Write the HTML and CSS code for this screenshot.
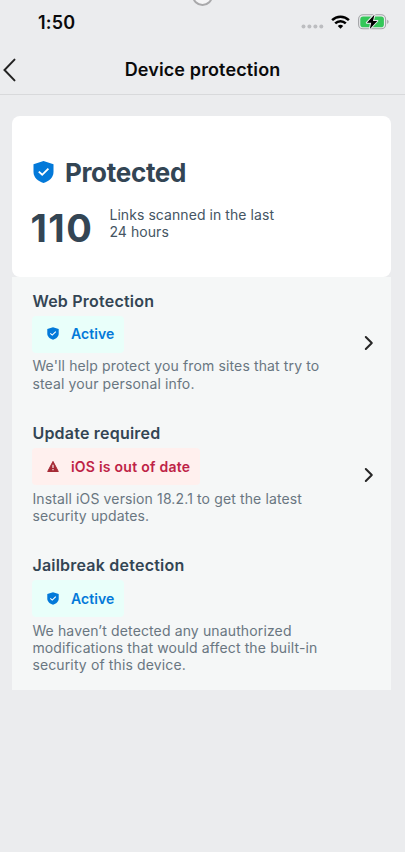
FILE: index.html
```html
<!DOCTYPE html>
<html lang="en">
<head>
<meta charset="utf-8">
<title>Device protection</title>
<link rel="stylesheet" href="styles.css">
</head>
<body>
<svg width="0" height="0" class="defs">
  <symbol id="shield" viewBox="0 0 21 22">
    <path d="M10.5 0 L20.5 3.2 V11 C20.5 16.5 16 20.2 10.5 22 C5 20.2 .5 16.5 .5 11 V3.2 Z" fill="#0379d9"/>
    <path class="tick" d="M5.8 10.6 L9.2 13.8 L15.4 7.6" fill="none" stroke="#fff"/>
  </symbol>
  <symbol id="chevron" viewBox="0 0 10 16">
    <path d="M1.8 2 L7.8 8 L1.8 14" fill="none" stroke="#262626" stroke-width="2" stroke-linecap="round" stroke-linejoin="round"/>
  </symbol>
</svg>
<div class="island"></div>
<header class="header">
  <div class="status">
    <span class="time">1:50</span>
    <span class="signals">
      <svg class="dots" width="23" height="5" viewBox="0 0 23 5" fill="#bcbdc0"><circle cx="2.5" cy="2.5" r="2"/><circle cx="8.4" cy="2.5" r="2"/><circle cx="14.4" cy="2.5" r="2"/><circle cx="20.3" cy="2.5" r="2"/></svg>
      <svg class="wifi" width="19" height="14" viewBox="0 0 19 14" fill="none" stroke="#000" stroke-width="2.5"><path d="M1.1 5.1 A12 12 0 0 1 17.9 5.1"/><path d="M4.2 8.4 A7.6 7.6 0 0 1 14.8 8.4"/><path d="M6.8 10.9 A4 4 0 0 1 12.2 10.9 L9.5 13.7 Z" fill="#000" stroke="none"/></svg>
      <svg class="battery" width="31" height="16" viewBox="0 0 31 16"><rect x=".6" y=".8" width="27" height="14" rx="4.4" fill="none" stroke="#a3a4a7" stroke-width="1.1"/><rect x="2.3" y="2.4" width="23.6" height="10.8" rx="2.8" fill="#34c759"/><path d="M29.2 5.8 Q30.6 6.5 30.6 7.8 T29.2 9.9 Z" fill="#a3a4a7"/><path d="M16.4 .8 L8.9 8.8 H13.2 L11.8 14.9 L19.3 6.9 H15 Z" fill="#000" stroke="#ebecee" stroke-width="2" paint-order="stroke" stroke-linejoin="round"/></svg>
    </span>
  </div>
  <div class="nav">
    <svg class="back" width="14" height="24" viewBox="0 0 14 24"><path d="M12.5 1.6 L2.5 12 L12.5 22.4" fill="none" stroke="#222" stroke-width="2" stroke-linecap="round"/></svg>
    <h1 class="title">Device protection</h1>
  </div>
</header>
<main class="content">
  <section class="card">
    <div class="state"><svg class="state-icon"><use href="#shield"/></svg><h2 class="state-text">Protected</h2></div>
    <div class="stat"><span class="count">110</span><p class="caption">Links scanned in the last<br>24 hours</p></div>
  </section>
  <section class="panel">
    <article class="item">
      <div class="body">
        <h3 class="name">Web Protection</h3>
        <div class="badge active"><svg class="badge-icon"><use href="#shield"/></svg><span>Active</span></div>
        <p class="desc">We'll help protect you from sites that try to<br>steal your personal info.</p>
      </div>
      <svg class="chevron"><use href="#chevron"/></svg>
    </article>
    <article class="item">
      <div class="body">
        <h3 class="name">Update required</h3>
        <div class="badge danger"><svg class="badge-icon" viewBox="0 0 12 12"><path d="M6 .9 L11.3 11 H.7 Z" fill="#a52a35" stroke="#a52a35" stroke-linejoin="round"/><path d="M6 4.3 V7.4 M6 8.5 V9.8" stroke="#fff" stroke-width="1.1"/></svg><span>iOS is out of date</span></div>
        <p class="desc">Install iOS version 18.2.1 to get the latest<br>security updates.</p>
      </div>
      <svg class="chevron"><use href="#chevron"/></svg>
    </article>
    <article class="item">
      <div class="body">
        <h3 class="name">Jailbreak detection</h3>
        <div class="badge active"><svg class="badge-icon"><use href="#shield"/></svg><span>Active</span></div>
        <p class="desc">We haven’t detected any unauthorized<br>modifications that would affect the built-in<br>security of this device.</p>
      </div>
    </article>
  </section>
</main>
</body>
</html>
```
FILE: styles.css
```css
* { box-sizing: border-box; margin: 0; padding: 0; }
body { min-height: 852px; background: #ebecee; color: #334554; font-family: Inter, "Liberation Sans", sans-serif; overflow: hidden; white-space: nowrap; }
svg { flex: none; }
.defs { position: absolute; }
.island { position: absolute; left: 192px; top: -15px; width: 21px; height: 21px; border: 2px solid #a9a9ab; border-radius: 50%; background: #f5f5f6; }
.header { height: 95px; border-bottom: 1px solid #d8d9db; color: #0a0a0b; }
.status { height: 44px; display: flex; justify-content: space-between; padding: 0 16px 0 38px; }
.time { font-size: 18px; line-height: 45px; font-weight: 600; letter-spacing: .2px; }
.signals { display: flex; align-items: flex-start; }
.dots { margin-top: 24px; }
.wifi { margin: 14.5px 0 0 7px; }
.battery { margin: 14px 0 0 8px; }
.nav { height: 50px; display: flex; align-items: center; padding-left: 2px; }
.back { margin-top: 1px; }
.title { flex: 1; padding-right: 16px; text-align: center; font-size: 18px; line-height: 24px; font-weight: 600; letter-spacing: .13px; margin-top: 1px; }
.content { margin: 21px 14px 0 12.4px; background: linear-gradient(#ebecee 161px, #f5f7f7 161px); }
.card { height: 161px; background: #fff; border-radius: 8px; padding: 39.5px 20px 0; }
.state { display: flex; align-items: center; gap: 11px; height: 33px; }
.state-icon { width: 21px; height: 22px; margin-left: .5px; }
.tick { stroke-width: 1.9; }
.state-text { font-size: 26px; line-height: 33px; font-weight: 700; letter-spacing: -.3px; }
.stat { display: flex; align-items: flex-start; margin-top: 17.5px; }
.count { width: 79px; margin: -1px 0 0 -2px; font-size: 38px; line-height: 46px; font-weight: 700; letter-spacing: 1.5px; }
.caption { font-size: 14px; line-height: 17px; letter-spacing: .07px; color: #455563; }
.panel { height: 413px; padding: 14px 17.5px 0 20px; }
.item { display: flex; justify-content: space-between; height: 132.2px; align-items: flex-start; }
.name { font-size: 16px; line-height: 20px; font-weight: 600; letter-spacing: .22px; }
.badge { display: flex; align-items: center; width: max-content; height: 37px; margin-top: 4.5px; padding: 0 10px .2px 15px; border-radius: 4px; gap: 11.5px; font-size: 14px; font-weight: 600; }
.badge-icon { width: 12px; height: 13px; }
.active { background: #e9fffa; color: #0379d9; letter-spacing: .07px; }
.danger { background: #fff0ee; color: #be2346; letter-spacing: .25px; }
.desc { margin-top: 4.9px; font-size: 14px; line-height: 17.2px; letter-spacing: .13px; color: #697681; }
.chevron { width: 10px; height: 16px; margin-top: 44px; }
```
